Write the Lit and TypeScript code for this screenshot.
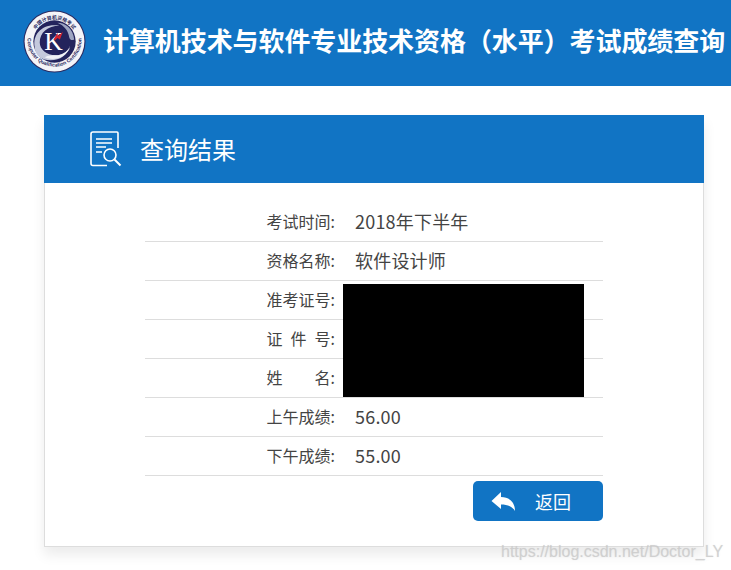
import { LitElement, html, css, svg } from 'lit';
import { customElement } from 'lit/decorators.js';

const rows = [
  { label: '考试时间:', value: '2018年下半年' },
  { label: '资格名称:', value: '软件设计师' },
  { label: '准考证号:', value: '' },
  { label: '证\u2002件\u2002号:', value: '' },
  { label: '姓\u3000\u3000名:', value: '' },
  { label: '上午成绩:', value: '56.00' },
  { label: '下午成绩:', value: '55.00' }
];

const logo = svg`
  <svg class="logo" viewBox="0 0 64 64" width="63" height="63">
    <defs>
      <path id="top-arc" d="M9.5 32a22.5 22.5 0 0 1 45 0"></path>
      <path id="bottom-arc" d="M4.5 30a27.5 27.5 0 0 0 55 0"></path>
    </defs>
    <circle cx="32" cy="32" r="31.5" fill="#2a2a60"></circle>
    <circle cx="32" cy="32" r="30.4" fill="#f4f4f8"></circle>
    <circle cx="32" cy="32" r="21.5" fill="#23235c"></circle>
    <text class="logo-cn"><textPath href="#top-arc" startOffset="50%" text-anchor="middle">中国计算机资格考试</textPath></text>
    <text class="logo-en"><textPath href="#bottom-arc" startOffset="50%" text-anchor="middle">Computer Qualification Certification</textPath></text>
    <path d="M12 38C9 25 20 13 37 16c-12 0-20 7-20 17 0 7 7 13 16 13 6 0 12-3 15-10-3 10-10 15-20 15-9 0-16-5-16-13z" fill="#c4c9dc"></path>
    <path d="M22 48c9 4 21 1 26-10-4 5-9 8-14 8-4 0-8 0-12 2z" fill="#f0f1f7"></path>
    <path d="M52 30C51 19 43 13 35 13c7 3 11 8 12 15 1 3 3 3 5 2z" fill="#9ea5c2"></path>
    <text class="logo-k" x="31" y="41" text-anchor="middle">K</text>
    <path d="M31 30l4-7 .5 4 5-5-3 8-2.500-1.500-2 2z" fill="#d5232f"></path>
  </svg>
`;

@customElement('app-root')
export class AppRoot extends LitElement {
  static styles = css`
    :host {
      display: block;
      width: 731px;
      height: 570px;
      overflow: hidden;
      position: relative;
      background: #fff;
      font-family: "Noto Sans CJK SC", "Noto Sans", sans-serif;
      color: #444;
    }

    .top {
      display: flex;
      align-items: center;
      height: 86px;
      padding-left: 23px;
      background: #1174c4;
      color: #fff;
      white-space: nowrap;
    }

    .logo {
      flex: none;
      margin-right: 17px;
      margin-top: -4px;
    }

    .logo-cn {
      font-size: 5px;
      font-weight: 700;
      fill: #2a2a60;
    }

    .logo-en {
      font-family: "Liberation Sans", sans-serif;
      font-size: 5.2px;
      font-weight: 700;
      fill: #2a2a60;
    }

    .logo-k {
      font-family: "Liberation Serif", serif;
      font-size: 26px;
      fill: #fff;
    }

    .top h1 {
      margin: -6px 0 0;
      font-size: 26px;
      font-weight: 700;
      line-height: 1;
      letter-spacing: -0.08px;
    }

    .card {
      width: 660px;
      box-sizing: border-box;
      margin: 29px 0 0 44px;
      border: 1px solid #ddd;
      border-top: none;
      padding-bottom: 25px;
      box-shadow: 0 8px 12px rgba(0, 0, 0, 0.08);
    }

    .card-head {
      display: flex;
      align-items: center;
      height: 68px;
      margin: 0 -1px;
      padding-left: 46px;
      background: #1174c4;
      color: #fff;
    }

    .card-head svg {
      flex: none;
      margin-right: 18px;
    }

    .card-head h2 {
      margin: 0;
      font-size: 24px;
      font-weight: 400;
      line-height: 1;
    }

    .rows {
      position: relative;
      width: 458px;
      margin: 20px 0 0 100px;
    }

    .row {
      display: flex;
      align-items: center;
      box-sizing: border-box;
      height: 39px;
      padding-bottom: 2px;
      border-bottom: 1px solid #ddd;
    }

    .label {
      box-sizing: border-box;
      width: 191px;
      padding-right: 1px;
      font-size: 16px;
      text-align: right;
      white-space: pre;
    }

    .value {
      margin-left: 19px;
      font-size: 18px;
      letter-spacing: 0.2px;
    }

    .redact {
      position: absolute;
      left: 198px;
      top: 81px;
      width: 241px;
      height: 113px;
      background: #000;
    }

    .actions {
      display: flex;
      justify-content: flex-end;
      width: 458px;
      margin: 5px 0 0 100px;
    }

    .back {
      display: flex;
      align-items: center;
      gap: 20px;
      box-sizing: border-box;
      width: 130px;
      height: 40px;
      padding: 0 0 0 18px;
      border: none;
      border-radius: 5px;
      background: #1174c4;
      color: #fff;
      font: inherit;
      font-size: 18px;
    }

    .watermark {
      position: absolute;
      left: 501px;
      top: 542px;
      font-family: "Liberation Sans", sans-serif;
      font-size: 16px;
      line-height: 20px;
      color: rgba(200, 200, 200, 0.7);
      text-shadow: 0 0 1px rgba(200, 200, 200, 0.5);
      white-space: nowrap;
    }
  `;

  render() {
    return html`
      <div class="top">
        ${logo}
        <h1>计算机技术与软件专业技术资格（水平）考试成绩查询</h1>
      </div>
      <div class="card">
        <div class="card-head">
          <svg viewBox="0 0 32 36" width="32" height="36" fill="none" stroke="#fff" stroke-width="1.6">
            <path d="M17 34.500H3a2 2 0 0 1-2-2V3a2 2 0 0 1 2-2h24a1 1 0 0 1 1 1v15"></path>
            <path d="M6 8h16M6 12h16M6 16h10M6 21h6"></path>
            <circle cx="20" cy="24" r="6"></circle>
            <path d="M24.500 28.500l6 6" stroke-width="2"></path>
          </svg>
          <h2>查询结果</h2>
        </div>
        <div class="rows">
          ${rows.map(
            (r) => html`
              <div class="row">
                <span class="label">${r.label}</span>
                <span class="value">${r.value}</span>
              </div>
            `
          )}
          <div class="redact"></div>
        </div>
        <div class="actions">
          <button class="back">
            <svg viewBox="0 0 24 20" width="24" height="20" fill="#fff">
              <path d="M.5 10L10 1v5c9 0 14 6 14 14-3-5-8-6.500-14-6.500V18z"></path>
            </svg>
            <span>返回</span>
          </button>
        </div>
      </div>
      <div class="watermark">https://blog.csdn.net/Doctor_LY</div>
    `;
  }
}
